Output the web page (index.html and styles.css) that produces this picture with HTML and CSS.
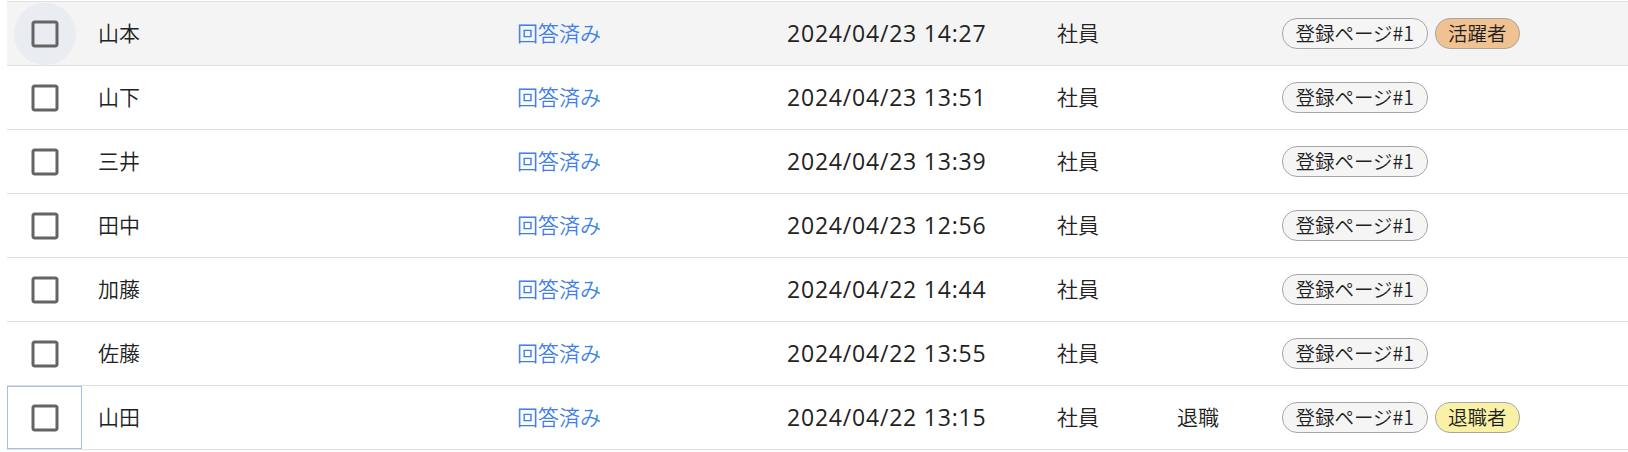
FILE: index.html
```html
<!DOCTYPE html>
<html lang="ja">
<head>
<meta charset="utf-8">
<link rel="stylesheet" href="styles.css">
</head>
<body>
<div class="table">
  <div class="row hover">
    <div class="cell check"><span class="cb hovered"><svg viewBox="0 0 24 24"><path d="M19 5v14H5V5h14m0-2H5c-1.1 0-2 .9-2 2v14c0 1.1.9 2 2 2h14c1.1 0 2-.9 2-2V5c0-1.1-.9-2-2-2z"/></svg></span></div>
    <div class="cell">山本</div>
    <div class="cell link">回答済み</div>
    <div class="cell date">2024/04/23 14:27</div>
    <div class="cell">社員</div>
    <div class="cell"></div>
    <div class="cell chips"><span class="chip">登録ページ#1</span><span class="chip orange">活躍者</span></div>
  </div>
  <div class="row">
    <div class="cell check"><span class="cb"><svg viewBox="0 0 24 24"><path d="M19 5v14H5V5h14m0-2H5c-1.1 0-2 .9-2 2v14c0 1.1.9 2 2 2h14c1.1 0 2-.9 2-2V5c0-1.1-.9-2-2-2z"/></svg></span></div>
    <div class="cell">山下</div>
    <div class="cell link">回答済み</div>
    <div class="cell date">2024/04/23 13:51</div>
    <div class="cell">社員</div>
    <div class="cell"></div>
    <div class="cell chips"><span class="chip">登録ページ#1</span></div>
  </div>
  <div class="row">
    <div class="cell check"><span class="cb"><svg viewBox="0 0 24 24"><path d="M19 5v14H5V5h14m0-2H5c-1.1 0-2 .9-2 2v14c0 1.1.9 2 2 2h14c1.1 0 2-.9 2-2V5c0-1.1-.9-2-2-2z"/></svg></span></div>
    <div class="cell">三井</div>
    <div class="cell link">回答済み</div>
    <div class="cell date">2024/04/23 13:39</div>
    <div class="cell">社員</div>
    <div class="cell"></div>
    <div class="cell chips"><span class="chip">登録ページ#1</span></div>
  </div>
  <div class="row">
    <div class="cell check"><span class="cb"><svg viewBox="0 0 24 24"><path d="M19 5v14H5V5h14m0-2H5c-1.1 0-2 .9-2 2v14c0 1.1.9 2 2 2h14c1.1 0 2-.9 2-2V5c0-1.1-.9-2-2-2z"/></svg></span></div>
    <div class="cell">田中</div>
    <div class="cell link">回答済み</div>
    <div class="cell date">2024/04/23 12:56</div>
    <div class="cell">社員</div>
    <div class="cell"></div>
    <div class="cell chips"><span class="chip">登録ページ#1</span></div>
  </div>
  <div class="row">
    <div class="cell check"><span class="cb"><svg viewBox="0 0 24 24"><path d="M19 5v14H5V5h14m0-2H5c-1.1 0-2 .9-2 2v14c0 1.1.9 2 2 2h14c1.1 0 2-.9 2-2V5c0-1.1-.9-2-2-2z"/></svg></span></div>
    <div class="cell">加藤</div>
    <div class="cell link">回答済み</div>
    <div class="cell date">2024/04/22 14:44</div>
    <div class="cell">社員</div>
    <div class="cell"></div>
    <div class="cell chips"><span class="chip">登録ページ#1</span></div>
  </div>
  <div class="row">
    <div class="cell check"><span class="cb"><svg viewBox="0 0 24 24"><path d="M19 5v14H5V5h14m0-2H5c-1.1 0-2 .9-2 2v14c0 1.1.9 2 2 2h14c1.1 0 2-.9 2-2V5c0-1.1-.9-2-2-2z"/></svg></span></div>
    <div class="cell">佐藤</div>
    <div class="cell link">回答済み</div>
    <div class="cell date">2024/04/22 13:55</div>
    <div class="cell">社員</div>
    <div class="cell"></div>
    <div class="cell chips"><span class="chip">登録ページ#1</span></div>
  </div>
  <div class="row">
    <div class="cell check focused"><span class="cb"><svg viewBox="0 0 24 24"><path d="M19 5v14H5V5h14m0-2H5c-1.1 0-2 .9-2 2v14c0 1.1.9 2 2 2h14c1.1 0 2-.9 2-2V5c0-1.1-.9-2-2-2z"/></svg></span></div>
    <div class="cell">山田</div>
    <div class="cell link">回答済み</div>
    <div class="cell date">2024/04/22 13:15</div>
    <div class="cell">社員</div>
    <div class="cell">退職</div>
    <div class="cell chips"><span class="chip">登録ページ#1</span><span class="chip yellow">退職者</span></div>
  </div>
</div>
</body>
</html>
```

FILE: styles.css
```css
html, body {
  margin: 0;
  padding: 0;
  background: #ffffff;
}
body {
  font-family: "Noto Sans CJK JP", "Noto Sans", sans-serif;
  font-weight: 350;
  color: #222222;
  overflow: hidden;
}
.table {
  margin: 1px 0 0 7px;
  border-top: 1px solid #e0e0e0;
}
.row {
  display: grid;
  grid-template-columns: 75px 419px 270px 270px 120px 105px 1fr;
  height: 63px;
  border-bottom: 1px solid #e0e0e0;
  background: #ffffff;
}
.row.hover {
  background: #f4f4f4;
}
.cell {
  display: flex;
  align-items: center;
  padding-left: 16px;
  padding-bottom: 3px;
  box-sizing: border-box;
  font-size: 21px;
  white-space: nowrap;
}
.cell.check {
  padding-left: 0;
  padding-bottom: 0;
  justify-content: center;
}
.cell.focused {
  outline: 1px solid #a3c0ea;
  outline-offset: -1px;
}
.cb {
  width: 62px;
  height: 62px;
  border-radius: 50%;
  display: flex;
  align-items: center;
  justify-content: center;
}
.cb.hovered {
  background: #e9edf1;
}
.cb svg {
  width: 36px;
  height: 36px;
  fill: #646464;
}
.link {
  color: #3f7fe6;
}
.cell.date {
  font-family: "Open Sans", "Noto Sans", sans-serif;
  font-weight: 400;
  font-size: 23px;
  letter-spacing: 0.8px;
  padding-bottom: 1px;
}
.cell.chips {
  gap: 7px;
  padding-bottom: 0;
}
.chip {
  display: inline-flex;
  align-items: center;
  height: 28px;
  padding: 0 12.5px 1px;
  box-sizing: content-box;
  border: 1px solid #a6a6a6;
  border-radius: 15px;
  background: #f5f5f5;
  font-size: 19.5px;
  line-height: 1;
  color: #1e1e1e;
}
.chip.orange {
  background: #f1c291;
}
.chip.yellow {
  background: #f9f1a6;
}
```
